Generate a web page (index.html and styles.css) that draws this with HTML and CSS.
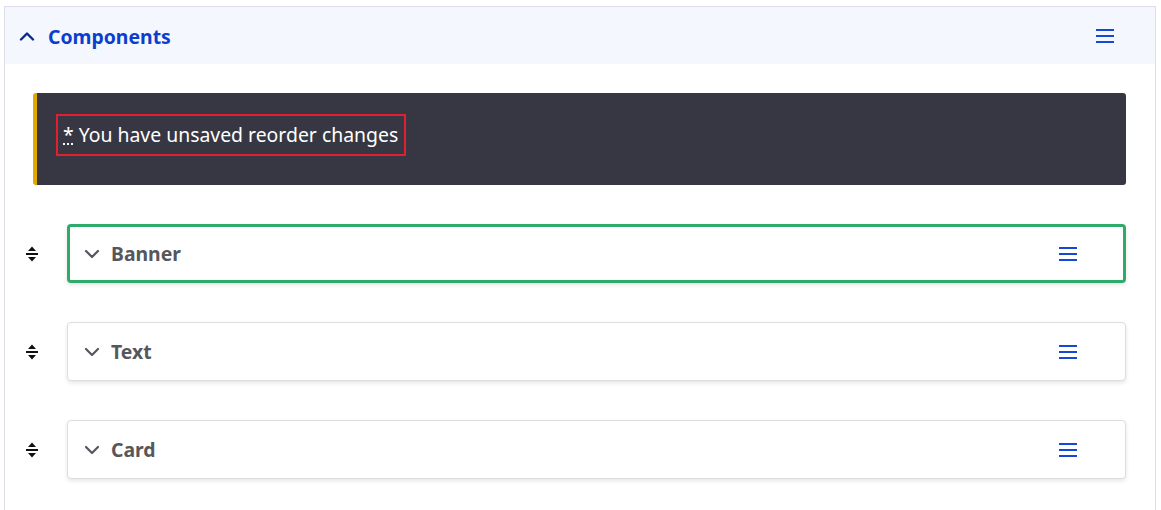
FILE: index.html
```html
<!DOCTYPE html>
<html lang="en">
<head>
    <meta charset="UTF-8">
    <meta name="viewport" content="width=device-width, initial-scale=1.0">
    <title>Components</title>
    <link rel="stylesheet" href="styles.css">
</head>
<body>
    <section class="panel">
        <header class="panel-head">
            <button class="toggle" type="button" aria-label="Collapse">
                <svg width="16" height="10" viewBox="0 0 16 10"><path d="M2 8.5 8 2.5l6 6" fill="none" stroke="currentColor" stroke-width="2.4" stroke-linecap="round" stroke-linejoin="round"/></svg>
            </button>
            <h2 class="panel-title">Components</h2>
            <button class="menu" type="button" aria-label="Menu">
                <svg width="20" height="14" viewBox="0 0 20 14"><path d="M1 1h18M1 7h18M1 13h18" stroke="currentColor" stroke-width="2.2"/></svg>
            </button>
        </header>

        <div class="panel-body">
            <div class="notice">
                <p class="notice-text"><abbr title="Unsaved">*</abbr> You have unsaved reorder changes</p>
            </div>

            <ul class="sort-list">
                <li class="sort-row">
                    <span class="handle">
                        <svg width="14" height="18" viewBox="0 0 14 18"><path d="M7 1.5 11 6H3z M1 8.1h12v1.8H1z M7 16.5 3 12h8z" fill="#111"/></svg>
                    </span>
                    <div class="item selected">
                        <svg class="chev" width="16" height="10" viewBox="0 0 16 10"><path d="M2 2l6 6 6-6" fill="none" stroke="currentColor" stroke-width="2.2" stroke-linecap="round" stroke-linejoin="round"/></svg>
                        <span class="item-name">Banner</span>
                        <svg class="menu-icon" width="20" height="14" viewBox="0 0 20 14"><path d="M1 1h18M1 7h18M1 13h18" stroke="currentColor" stroke-width="2.2"/></svg>
                    </div>
                </li>
                <li class="sort-row">
                    <span class="handle">
                        <svg width="14" height="18" viewBox="0 0 14 18"><path d="M7 1.5 11 6H3z M1 8.1h12v1.8H1z M7 16.5 3 12h8z" fill="#111"/></svg>
                    </span>
                    <div class="item">
                        <svg class="chev" width="16" height="10" viewBox="0 0 16 10"><path d="M2 2l6 6 6-6" fill="none" stroke="currentColor" stroke-width="2.2" stroke-linecap="round" stroke-linejoin="round"/></svg>
                        <span class="item-name">Text</span>
                        <svg class="menu-icon" width="20" height="14" viewBox="0 0 20 14"><path d="M1 1h18M1 7h18M1 13h18" stroke="currentColor" stroke-width="2.2"/></svg>
                    </div>
                </li>
                <li class="sort-row">
                    <span class="handle">
                        <svg width="14" height="18" viewBox="0 0 14 18"><path d="M7 1.5 11 6H3z M1 8.1h12v1.8H1z M7 16.5 3 12h8z" fill="#111"/></svg>
                    </span>
                    <div class="item">
                        <svg class="chev" width="16" height="10" viewBox="0 0 16 10"><path d="M2 2l6 6 6-6" fill="none" stroke="currentColor" stroke-width="2.2" stroke-linecap="round" stroke-linejoin="round"/></svg>
                        <span class="item-name">Card</span>
                        <svg class="menu-icon" width="20" height="14" viewBox="0 0 20 14"><path d="M1 1h18M1 7h18M1 13h18" stroke="currentColor" stroke-width="2.2"/></svg>
                    </div>
                </li>
            </ul>
        </div>
    </section>
</body>
</html>
```

FILE: styles.css
```css
* {
    box-sizing: border-box;
}
body {
    margin: 0;
    padding: 6px 5px 0 4px;
    font-family: "Noto Sans", "Open Sans", sans-serif;
    background: #ffffff;
    height: 510px;
    overflow: hidden;
}
.panel {
    border: 1px solid #dedde8;
    border-bottom: none;
    height: 504px;
}
.panel-head {
    display: flex;
    align-items: center;
    height: 57px;
    padding: 1px 40px 0 14px;
    background: #f4f7fe;
}
.toggle, .menu {
    border: none;
    background: none;
    padding: 0;
    display: flex;
    cursor: pointer;
}
.toggle {
    color: #0b2a8c;
    margin-right: 13px;
}
.panel-title {
    flex: 1;
    margin: 0;
    font-size: 19.4px;
    font-weight: bold;
    color: #0b3ecc;
}
.menu {
    color: #1548d4;
}
.panel-body {
    padding: 29px 29px 0 28px;
}
.notice {
    background: #373743;
    border-left: 4px solid #e0a800;
    border-radius: 3px;
    height: 92px;
    padding: 21px 20px 0 19px;
}
.notice-text {
    display: inline-block;
    margin: 0;
    padding: 6px 6px 6px 5px;
    border: 2px solid #e0202e;
    color: #ffffff;
    font-size: 19.4px;
    line-height: 26px;
}
.notice-text abbr {
    text-decoration: underline dotted;
    text-underline-offset: 2px;
}
.sort-list {
    list-style: none;
    margin: 39px 0 0 -13px;
    padding: 0;
    display: flex;
    flex-direction: column;
    gap: 39px;
}
.sort-row {
    display: flex;
    align-items: center;
    gap: 23px;
}
.handle {
    width: 24px;
    display: flex;
    justify-content: center;
}
.item {
    flex: 1;
    display: flex;
    align-items: center;
    height: 59px;
    padding: 0 47px 0 16px;
    border: 1px solid #dddddd;
    border-radius: 4px;
    box-shadow: 0 2px 4px rgba(0, 0, 0, 0.1);
    background: #ffffff;
}
.item.selected {
    border: 3px solid #2eaa6a;
    padding-left: 14px;
    padding-right: 45px;
}
.chev {
    color: #555760;
    margin-right: 11px;
}
.item-name {
    flex: 1;
    font-size: 19.4px;
    font-weight: bold;
    color: #55575c;
}
.menu-icon {
    color: #1548d4;
}
```
